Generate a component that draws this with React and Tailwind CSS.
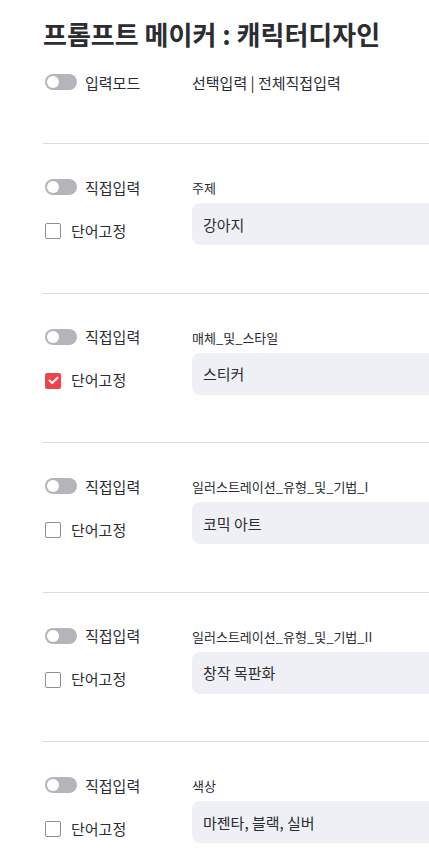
import { useState } from "react";

const fields = [
  { label: "주제", value: "강아지", fixed: false },
  { label: "매체_및_스타일", value: "스티커", fixed: true },
  { label: "일러스트레이션_유형_및_기법_I", value: "코믹 아트", fixed: false },
  { label: "일러스트레이션_유형_및_기법_II", value: "창작 목판화", fixed: false },
  { label: "색상", value: "마젠타, 블랙, 실버", fixed: false },
];

function Toggle() {
  return (
    <span className="relative inline-block w-[32px] h-[16px] rounded-full bg-[#b4b5ba] shrink-0">
      <span className="absolute left-[2px] top-[2px] w-[12px] h-[12px] rounded-full bg-white" />
    </span>
  );
}

function Check({ on }) {
  if (on) {
    return (
      <span className="flex items-center justify-center w-[16px] h-[16px] rounded-[2px] bg-[#f1434b] shrink-0">
        <svg width="11" height="9" viewBox="0 0 11 9" fill="none">
          <path d="M1.5 4.5 L4.2 7 L9.5 1.8" stroke="white" strokeWidth="2" strokeLinecap="round" strokeLinejoin="round" />
        </svg>
      </span>
    );
  }
  return <span className="block w-[16px] h-[16px] rounded-[2px] border border-[#8e8f94] bg-white shrink-0" />;
}

function Field({ f }) {
  const [val, setVal] = useState(f.value);
  return (
    <div className="flex border-t border-[#dadbdd] pt-[34px] pb-[47.5px]">
      <div className="w-[149px] shrink-0">
        <div className="flex items-center h-[20px]">
          <span className="ml-[2px]"><Toggle /></span>
          <span className="ml-[8px] text-[15px] text-[#2b2d33]">직접입력</span>
        </div>
        <div className="flex items-center h-[20px] mt-[23px]">
          <span className="ml-[2px]"><Check on={f.fixed} /></span>
          <span className="ml-[10px] text-[15px] text-[#2b2d33]">단어고정</span>
        </div>
      </div>
      <div className="flex-1">
        <div className="h-[20px] text-[13px] leading-[20px] text-[#2b2d33]">{f.label}</div>
        <input
          value={val}
          onChange={(e) => setVal(e.target.value)}
          className="mt-[5px] w-full h-[42px] rounded-[8px] bg-[#eff0f5] px-[11px] text-[15px] text-[#2b2d33] outline-none"
        />
      </div>
    </div>
  );
}

export default function App() {
  return (
    <div className="w-full overflow-hidden bg-white" style={{ fontFamily: '"Noto Sans CJK KR", "Noto Sans", sans-serif' }}>
      <div className="w-[900px] pl-[43px]">
        <h1 className="pt-[16px] text-[26px] leading-[36px] font-bold text-[#2b2d33]">프롬프트 메이커 : 캐릭터디자인</h1>
        <div className="flex items-center h-[20px] mt-[21px] mb-[50px]">
          <div className="w-[149px] flex items-center">
            <span className="ml-[2px]"><Toggle /></span>
            <span className="ml-[8px] text-[15px] text-[#2b2d33]">입력모드</span>
          </div>
          <span className="text-[15px] text-[#2b2d33]">선택입력 | 전체직접입력</span>
        </div>
        {fields.map((f) => (
          <Field key={f.label} f={f} />
        ))}
      </div>
    </div>
  );
}
